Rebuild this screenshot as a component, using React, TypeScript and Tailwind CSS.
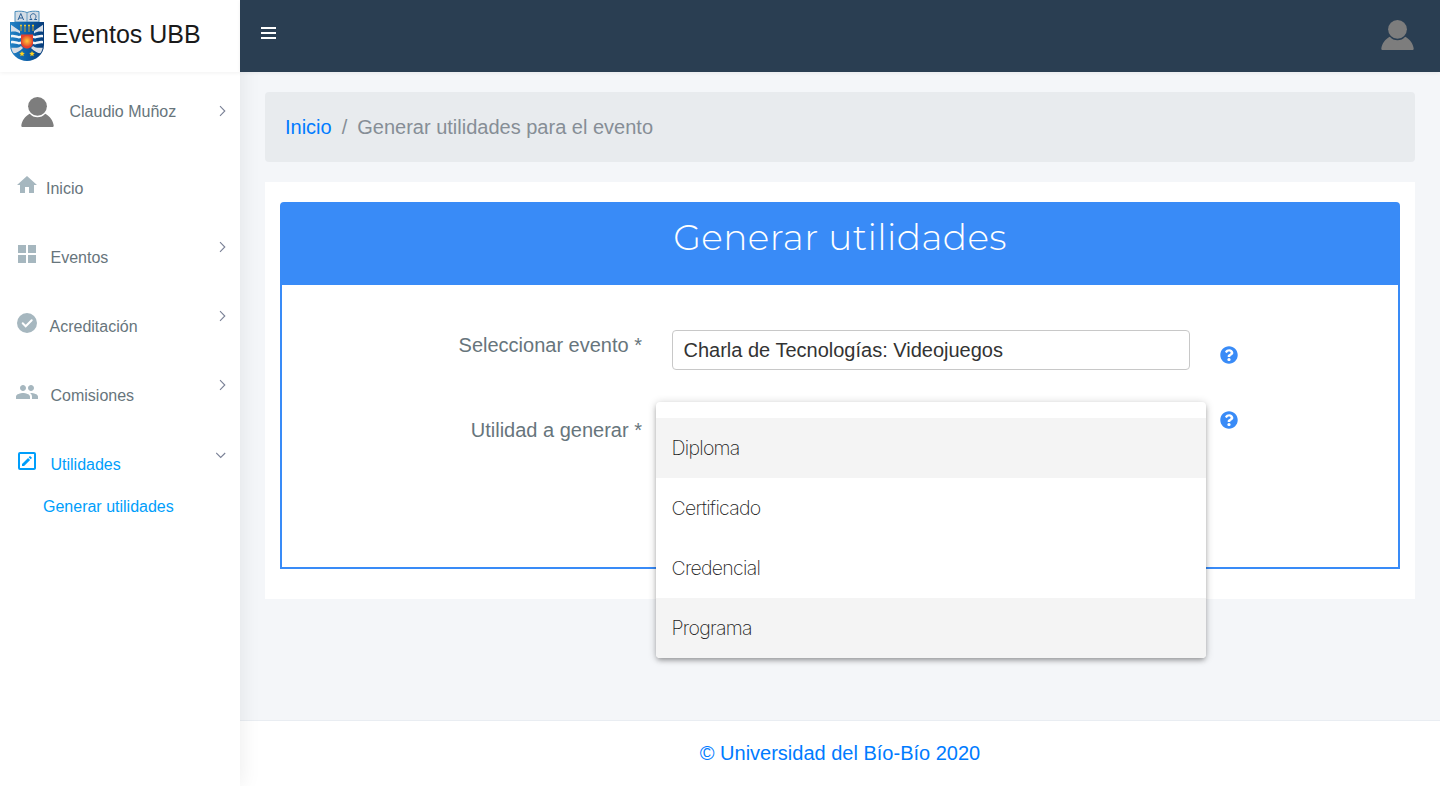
import React from "react";
import { FaQuestionCircle } from "react-icons/fa";

function Crest() {
  return (
    <svg width="36" height="52" viewBox="0 0 36 52" className="shrink-0">
      <defs>
        <linearGradient id="shield" x1="0" x2="1">
          <stop offset="0" stopColor="#2383c6" />
          <stop offset="0.5" stopColor="#0b5fa8" />
          <stop offset="1" stopColor="#063a78" />
        </linearGradient>
        <radialGradient id="sun">
          <stop offset="0" stopColor="#ffc83a" />
          <stop offset="1" stopColor="#e5502c" />
        </radialGradient>
        <clipPath id="body">
          <path d="M2 13h32V35c0 9-8 15-16 15S2 44 2 35z" />
        </clipPath>
      </defs>
      <path d="M6 1.500c5-.6 9-.3 12 1 3-1.300 7-1.600 12-1V12H6z" fill="#d3dde6" stroke="#4b8dba" />
      <path d="M18 2.500V12" stroke="#4b8dba" strokeWidth="0.800" />
      <path d="M9 10l2.800-6.500 2.800 6.500M10 8h3.600" fill="none" stroke="#2a6096" strokeWidth="1" />
      <path d="M20.500 9.500H23c-3-2.500-1.200-5.800 1.200-5.800s4.200 3.300 1.200 5.800H28" fill="none" stroke="#2a6096" strokeWidth="1" />
      <path d="M1 12h34V35c0 9.500-8.500 16-17 16S1 44.500 1 35z" fill="url(#shield)" />
      <g clipPath="url(#body)">
        <path d="M1 14l10 7v2.500C8 21.500 5 21 1 22zM35 14l-10 7v2.500c3-2 6-2.500 10-1.500z" fill="#d5dee8" />
        <path d="M1 25.500c4-2 7 1.500 11 0v2.500c-4 1.500-7-2-11 0zM35 25.500c-4-2-7 1.500-11 0v2.500c4 1.500 7-2 11 0zM1 31.500c4-2 7 1.500 11 0v2.500c-4 1.500-7-2-11 0zM35 31.500c-4-2-7 1.500-11 0v2.500c4 1.500 7-2 11 0z" fill="#f1f5f9" />
        <path d="M1 38c4-1 7 1 11-2l2 2C10 42 6 44 3 43zM35 38c-4-1-7 1-11-2l-2 2c4 4 8 6 11 5z" fill="#d9dde4" />
      </g>
      <path d="M12 16v5M16 16v6M20 16v6M24 16v5" stroke="#a8984e" strokeWidth="1.200" />
      <path d="M11 15.500h2M15 15.500h2M19 15.500h2M23 15.500h2" stroke="#e8c633" strokeWidth="1.600" />
      <path d="M12 24.500h12V33c0 3-3 5.500-6 5.500S12 36 12 33z" fill="#e5402f" />
      <circle cx="18" cy="31" r="5.500" fill="url(#sun)" />
      <path d="M13 41l.8 1.800 2 .2-1.500 1.300.4 2-1.700-1-1.700 1 .4-2-1.500-1.300 2-.2zM23 41l.8 1.800 2 .2-1.500 1.300.4 2-1.700-1-1.700 1 .4-2-1.500-1.300 2-.2z" fill="#ffd21f" />
    </svg>
  );
}

function Avatar() {
  return (
    <svg width="34" height="32" viewBox="-0.5 0 34 32" className="shrink-0" fill="#7d7d7d">
      <circle cx="17" cy="10.300" r="9.400" />
      <path d="M9.300 17.700C11.200 20 14 21.300 17 21.300s5.800-1.300 7.700-3.600C29.500 20.100 32.500 24.500 33.200 29.500q.1 1.500-1.200 1.500H2Q.7 31 .8 29.500C1.500 24.500 4.500 20.100 9.300 17.700z" />
    </svg>
  );
}

function Chevron({ down = false }: { down?: boolean }) {
  return (
    <svg width="12" height="12" viewBox="0 0 12 12" fill="none" stroke="#7a8196" strokeWidth="1.100" className="shrink-0">
      <path d={down ? "M0.200 4L4.700 8.500L9.200 4" : "M4 1.200L8.800 6L4 10.800"} />
    </svg>
  );
}

type Item = { label: string; icon: string; check?: boolean; gap: string; arrow?: "right" | "down"; active?: boolean };

const items: Item[] = [
  { label: "Inicio", icon: "M10 20v-6h4v6h5v-8h3L12 3 2 12h3v8z", gap: "pl-[7px]" },
  { label: "Eventos", icon: "M3 11H11V3H3M3 21H11V13H3M13 21H21V13H13M13 3V11H21V3", gap: "pl-[11.5px]", arrow: "right" },
  { label: "Acreditación", icon: "M12 2a10 10 0 1 0 0 20 10 10 0 0 0 0-20z", check: true, gap: "pl-[10.5px]", arrow: "right" },
  {
    label: "Comisiones",
    icon: "M16 11c1.660 0 2.990-1.340 2.990-3S17.660 5 16 5s-3 1.340-3 3 1.340 3 3 3zm-8 0c1.660 0 2.990-1.340 2.990-3S9.660 5 8 5 5 6.340 5 8s1.340 3 3 3zm0 2c-2.330 0-7 1.170-7 3.500V19h14v-2.500c0-2.330-4.670-3.500-7-3.500zm8 0c-.29 0-.62.02-.97.05 1.160.84 1.970 1.970 1.970 3.450V19h6v-2.500c0-2.330-4.670-3.500-7-3.500z",
    gap: "pl-[11.5px]",
    arrow: "right",
  },
  {
    label: "Utilidades",
    icon: "M19,19V5H5V19H19M19,3A2,2 0 0,1 21,5V19C21,20.11 20.1,21 19,21H5A2,2 0 0,1 3,19V5A2,2 0 0,1 5,3H19M16.7,9.35L15.7,10.35L13.65,8.3L14.65,7.3C14.86,7.08 15.21,7.08 15.42,7.3L16.7,8.58C16.92,8.79 16.92,9.14 16.7,9.35M7,14.94L13.06,8.88L15.12,10.94L9.06,17H7V14.94Z",
    gap: "pl-[11.5px]",
    arrow: "down",
    active: true,
  },
];

function Sidebar() {
  return (
    <aside className="z-10 flex w-60 shrink-0 flex-col bg-white shadow-[1px_0_20px_rgba(0,0,0,0.08)]">
      <div className="flex h-[72px] items-center pl-[9px] shadow-[0_1px_4px_rgba(0,0,0,0.06)]">
        <Crest />
        <span className="mb-[3px] ml-[7px] text-[25px] leading-none text-[#1a1a1a]">Eventos UBB</span>
      </div>
      <div className="flex h-[78px] items-center pt-[2px] pr-3 pl-5">
        <Avatar />
        <span className="ml-[15.5px] flex-1 text-base text-[#67757c]">Claudio Muñoz</span>
        <span className="mb-[2px]">
          <Chevron />
        </span>
      </div>
      <nav className="pt-[4px]">
        {items.map((item) => (
          <div key={item.label} className="flex h-[69px] items-center pr-3 pl-[15px]">
            <svg
              width="24"
              height="24"
              viewBox="0 0 24 24"
              className={item.active ? "mb-[7px] shrink-0 fill-[#009efb]" : "mb-[7px] shrink-0 fill-[#a6b7bf]"}
            >
              <path d={item.icon} />
              {item.check && <path d="M7.700 12.300l3 3L16.700 9.300" fill="none" stroke="white" strokeWidth="2" strokeLinecap="round" />}
            </svg>
            <span className={`flex-1 text-base ${item.gap} ${item.active ? "text-[#009efb]" : "text-[#67757c]"}`}>{item.label}</span>
            {item.arrow && (
              <span className={item.arrow === "down" ? "mb-[19px]" : "mb-[21px]"}>
                <Chevron down={item.arrow === "down"} />
              </span>
            )}
          </div>
        ))}
        <a className="-mt-1 block pl-[43px] text-base text-[#009efb]">Generar utilidades</a>
      </nav>
    </aside>
  );
}

const options = [
  { label: "Diploma", shaded: true },
  { label: "Certificado", shaded: false },
  { label: "Credencial", shaded: false },
  { label: "Programa", shaded: true },
];

export default function App() {
  return (
    <div className="flex h-[786px] w-[1440px] overflow-hidden bg-[#f4f6f9] font-['Liberation_Sans',Arial,sans-serif]">
      <Sidebar />
      <div className="flex flex-1 flex-col">
        <header className="z-20 flex h-[72px] shrink-0 items-center justify-between bg-[#2a3e52] pr-[26px] pb-[2px] pl-[21px] shadow-[0_1px_4px_rgba(0,0,0,0.06)]">
          <div className="mb-[5px] flex w-[15px] flex-col gap-[3px]">
            <span className="h-[2px] bg-white" />
            <span className="h-[2px] bg-white" />
            <span className="h-[2px] bg-white" />
          </div>
          <Avatar />
        </header>
        <main className="flex-1 px-[25px] pt-5">
          <div className="flex h-[70px] items-center rounded bg-[#e8ebee] px-5 text-xl text-[#868e96]">
            <a className="text-[#007bff]">Inicio</a>
            <span className="px-[10px]">/</span>
            <span>Generar utilidades para el evento</span>
          </div>
          <section className="mt-5 h-[417px] bg-white px-[15px] pt-5">
            <div className="h-[367px] rounded-t border-2 border-[#398bf7]">
              <div className="flex h-[81px] justify-center bg-[#398bf7] pt-[11px] font-['Montserrat','Inter',sans-serif] text-4xl leading-[44px] font-light tracking-[0.360px] text-white">
                Generar utilidades
              </div>
              <div className="grid grid-cols-[360px_518px_1fr] gap-x-[30px] pt-[45px] text-xl text-[#67757c]">
                <label className="h-[85px] text-right leading-[30px]">Seleccionar evento *</label>
                <div className="flex h-10 items-center rounded border border-[#c8c8c8] px-[10.5px] text-[#333]">
                  Charla de Tecnologías: Videojuegos
                </div>
                <FaQuestionCircle size={18} className="mt-4 text-[#398bf7]" />
                <label className="text-right leading-[30px]">Utilidad a generar *</label>
                <div className="relative">
                  <div className="absolute -top-[13px] -left-4 z-10 w-[550px] rounded bg-white pt-4 font-['Helvetica_Neue','Inter',sans-serif] font-extralight text-[#222] shadow-[0_3px_5px_-1px_rgba(0,0,0,0.3),0_1px_8px_rgba(0,0,0,0.2)]">
                    {options.map((o) => (
                      <div
                        key={o.label}
                        className={`flex h-[60px] items-center px-[15.5px] pt-[2px] text-[19.5px] tracking-[-0.720px] last:rounded-b ${o.shaded ? "bg-[#f4f4f4]" : "bg-white"}`}
                      >
                        {o.label}
                      </div>
                    ))}
                  </div>
                </div>
                <FaQuestionCircle size={18} className="-mt-1 text-[#398bf7]" />
              </div>
            </div>
          </section>
        </main>
        <footer className="flex h-[66px] items-center justify-center border-t border-[#e9edf2] bg-white pb-[2px] text-xl text-[#007bff]">
          © Universidad del Bío-Bío 2020
        </footer>
      </div>
    </div>
  );
}
